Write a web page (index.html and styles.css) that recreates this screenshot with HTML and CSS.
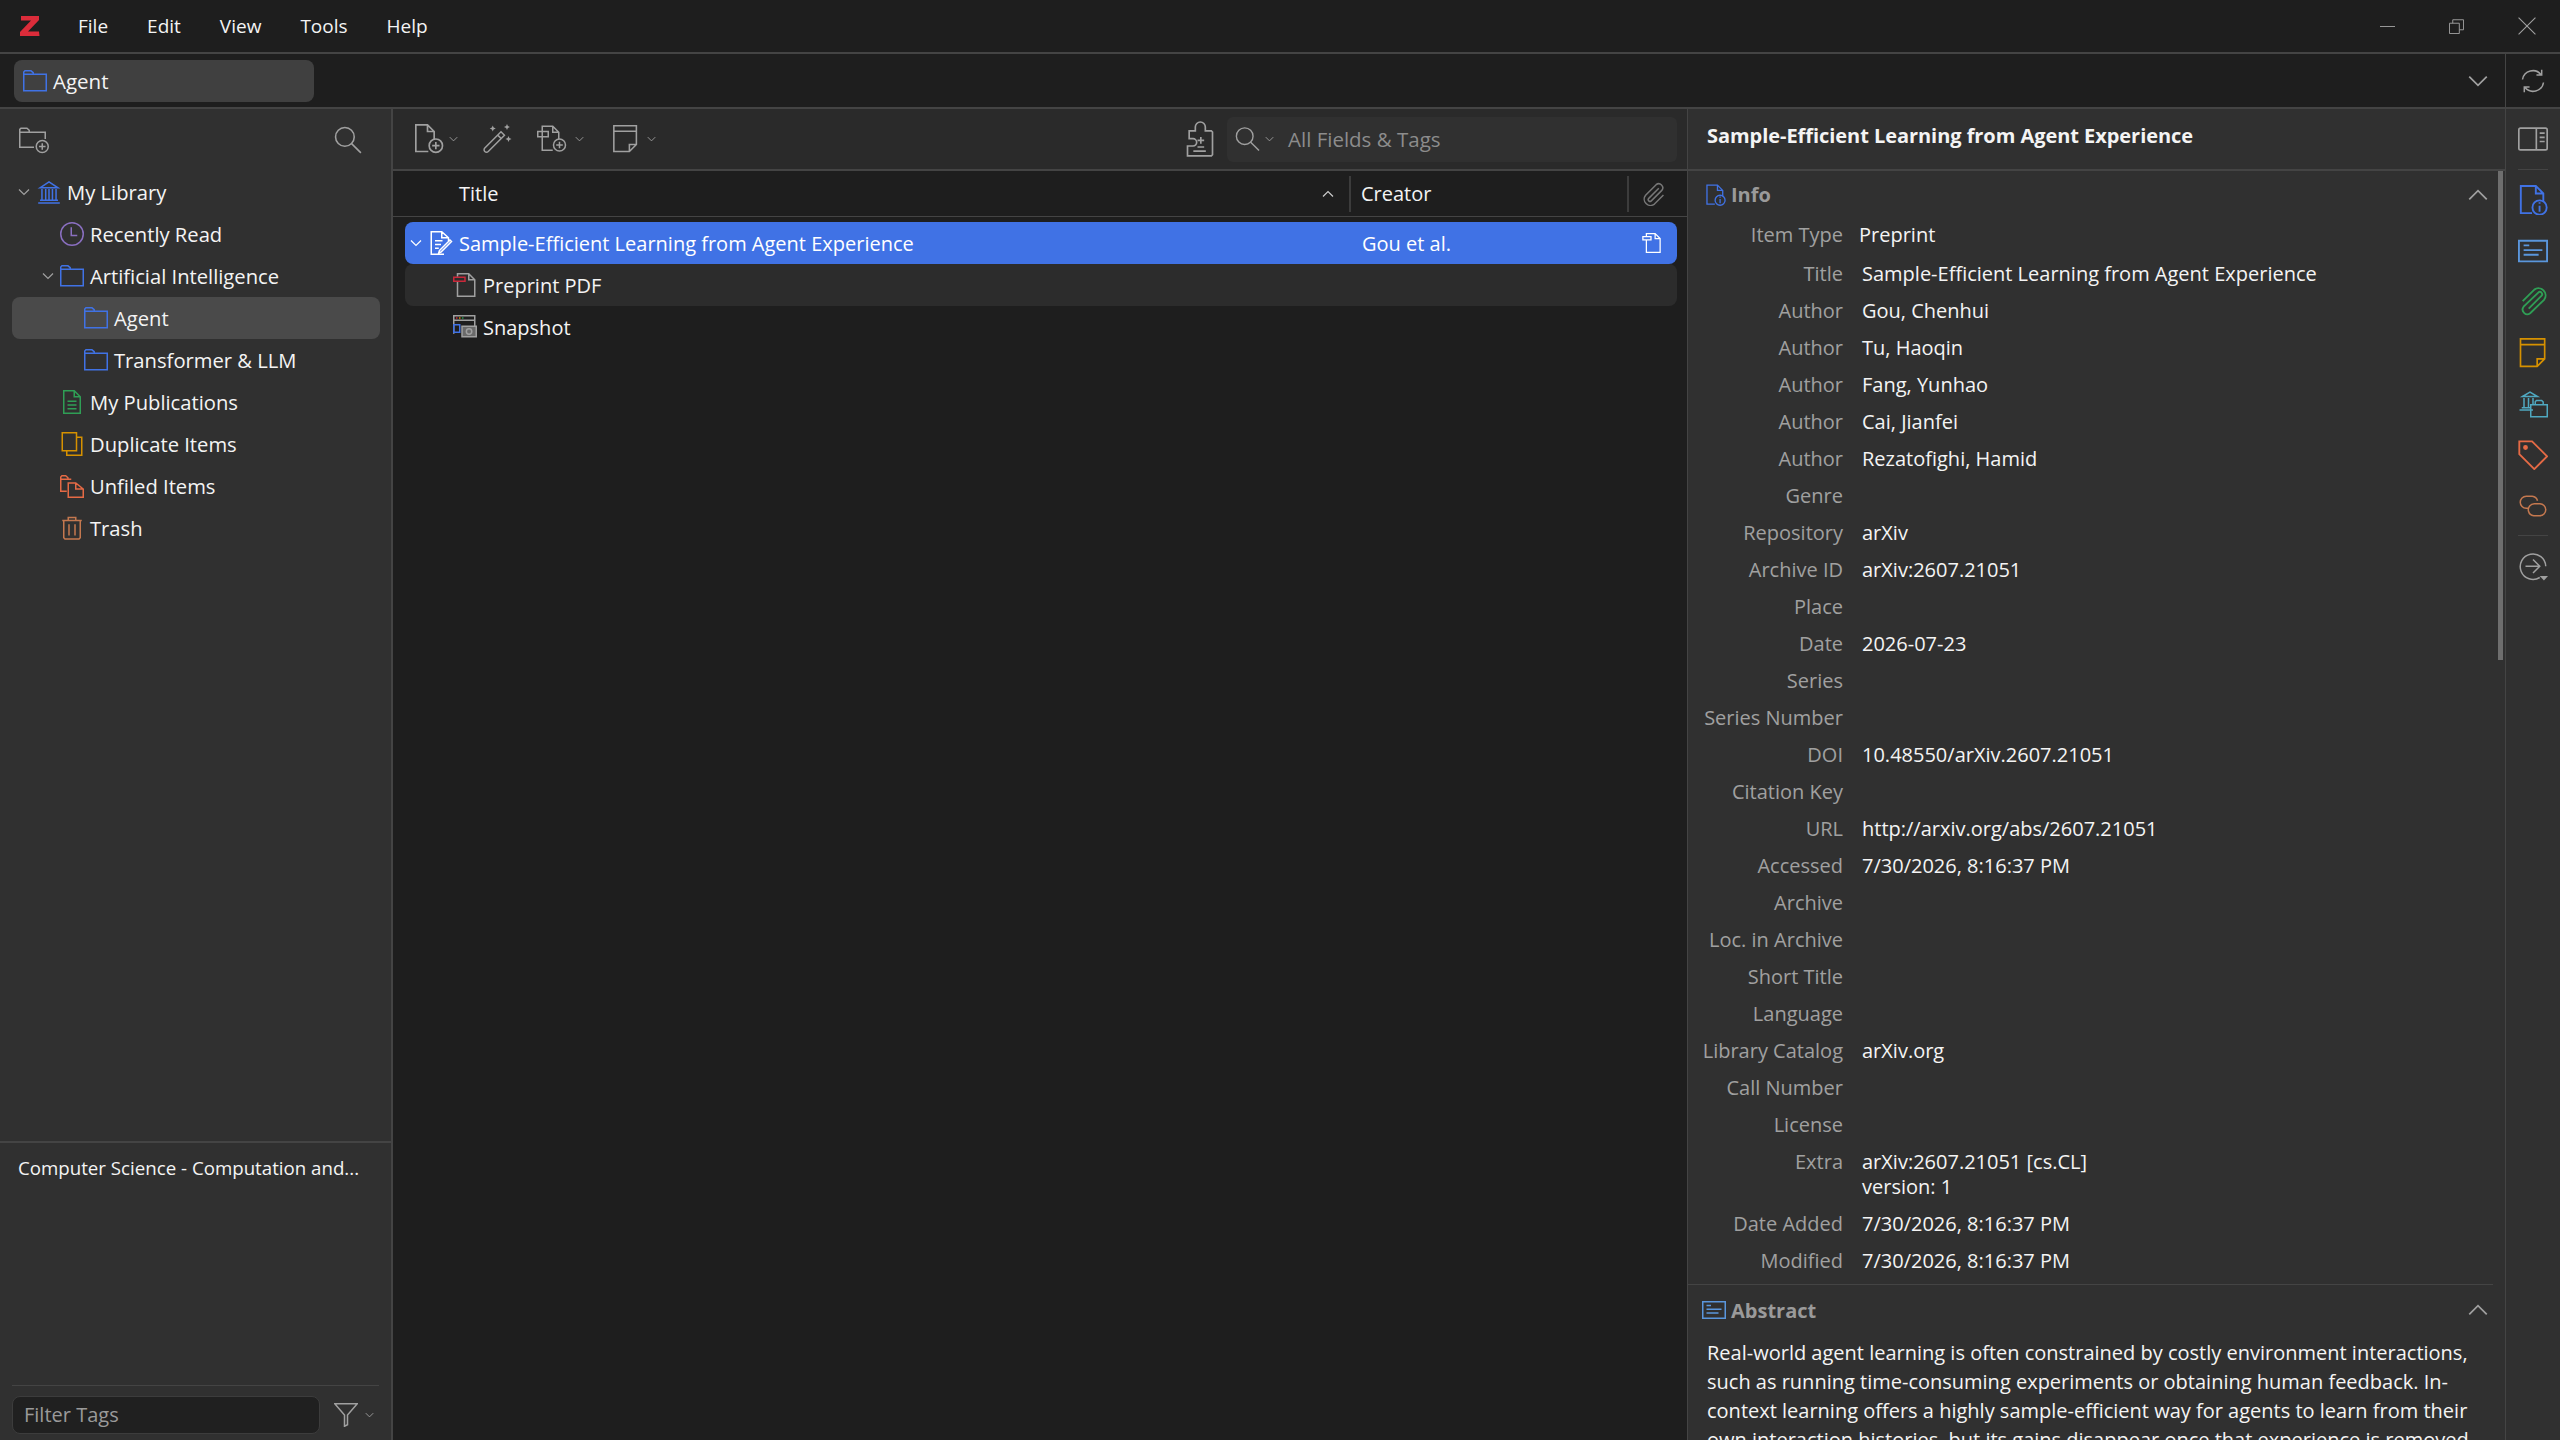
FILE: index.html
```html
<!DOCTYPE html>
<html lang="en">
<head>
    <meta charset="UTF-8">
    <title>Zotero</title>
    <link rel="stylesheet" href="styles.css">
</head>
<body>
    <svg class="sprite" xmlns="http://www.w3.org/2000/svg">
        <symbol id="i-folder" viewBox="0 0 16 16"><path d="M.5 3.5h15v11H.5zM.5 3.5V2l.8-.8h4l1.5 1.2v1.1"/></symbol>
        <symbol id="i-folder-add" viewBox="0 0 20 18"><path d="M10 13.5H.5v-10h17v4.5M.5 3.5V1.6l.8-.8h4l1.5 1.4v1.3"/><circle cx="15.5" cy="13" r="4"/><path d="M15.500 10.800v4.400M13.300 13h4.400"/></symbol>
        <symbol id="i-search" viewBox="0 0 18 18"><circle cx="7" cy="7" r="6"/><path d="M11.300 11.300l6 6"/></symbol>
        <symbol id="i-library" viewBox="0 0 16 16"><path d="M2 5.200L8 1.200l6 4zM.8 15.300h14.400M2 13.500h12M3.300 6v7.500M5.800 6v7.500M8 6v7.500M10.300 6v7.500M12.700 6v7.500"/></symbol>
        <symbol id="i-clock" viewBox="0 0 16 16"><circle cx="8" cy="8" r="7.500"/><path d="M7.500 3.500v5.500h4"/></symbol>
        <symbol id="i-pubs" viewBox="0 0 16 16"><path d="M2.500.5h7l4 4v11h-11zM9.500.5v4h4M5 7.500h6M5 10h6M5 12.500h6"/></symbol>
        <symbol id="i-dupes" viewBox="0 0 16 16"><path d="M1.500.5h9.500v12H1.500zM11 3.500h3.500v12H4.500v-3"/></symbol>
        <symbol id="i-unfiled" viewBox="0 0 16 16"><path d="M4.500 11.500H.5v-8h7M.5 3.500V2l.8-.8h2.500l1.500 1.300v1M5.500 6h5l5 4v5.500h-10zM10.500 6v4h5"/></symbol>
        <symbol id="i-trash" viewBox="0 0 16 16"><path d="M1.500 3h13M5.500 3V1h5v2M2.500 3v11.500l.8.8h9.400l.8-.8V3M6 5.500v7.500M10 5.500v7.500"/></symbol>
        <symbol id="i-new-item" viewBox="0 0 18 18"><path d="M8 16.500H.5V.5h7l4 4v4.500M7.500.5v4h4"/><circle cx="12.500" cy="13" r="4"/><path d="M12.500 10.800v4.400M10.300 13h4.400"/></symbol>
        <symbol id="i-wand" viewBox="0 0 20 20"><path d="M1.200 16L12 5.200l2.300 2.300L3.500 18.300a1.600 1.600 0 0 1-2.300-2.300zM9.800 7.400l2.300 2.300"/><path class="solid" d="M6.500 1l.6 1.400 1.400.6-1.400.6-.6 1.400-.6-1.400L4.500 3l1.400-.6zM16 0l.6 1.400 1.400.6-1.400.6-.6 1.400-.6-1.400L14 2l1.400-.6zM17 8l.6 1.400 1.400.6-1.400.6-.6 1.400-.6-1.400L15 10l1.400-.6z"/></symbol>
        <symbol id="i-new-attach" viewBox="0 0 20 18"><path d="M10.500 16.500H3.500V.5h7l4 4v4.500M10.500.5v4h4"/><path d="M.5 4h7v3.500h-7z"/><circle cx="15" cy="13" r="4"/><path d="M15 10.800v4.400M12.800 13h4.400"/></symbol>
        <symbol id="i-note" viewBox="0 0 16 18"><path d="M.5.5h14.500v12l-4.500 4.500H.5zM.5 4h14.500M15 12.500h-4.500V17"/></symbol>
        <symbol id="i-locate" viewBox="0 0 18 22"><path d="M1.500 20.800h14.300l.7-.7V6.500l-.7-.7h-3.600V3.500a3 3 0 0 0-6 0v2.300H2.500v4.700h2.300a2.200 2.200 0 0 1 0 4.400H1.500v5.900z"/><path d="M9.500 9.500v4M7.500 11.500h4M7.500 15.500h4M5 18h7.500"/></symbol>
        <symbol id="i-clip" viewBox="0 0 16 16"><path d="M11.200 4.200l-6.700 6.700a1.200 1.200 0 0 0 1.700 1.700l7-7a2.700 2.700 0 0 0-3.800-3.800l-7 7a4.200 4.200 0 0 0 5.900 5.900l6-6"/></symbol>
        <symbol id="i-preprint" viewBox="0 0 16 16"><path d="M3.500 5.500v10h11v-11l-4-4h-7v2.300M10.500.5v4h4"/><path d="M.7 2.800h6.500v2.600H.7z"/></symbol>
        <symbol id="i-pdf" viewBox="0 0 16 16"><path d="M3 5.500v10h11.500v-11l-4-4H3v2M10.500.5v4h4"/><path d="M.5 2.800h7.500v2.700H.5z" stroke="#c9283a"/></symbol>
        <symbol id="i-snapshot" viewBox="0 0 16 16"><path d="M.5 12.500V.5h14v8M.5 3.500h14"/><path d="M.5 6.500h4v5h-4z" stroke="#4072e5"/><path d="M6 7.500h9.500v7H6z" fill="#6a6a6a"/><circle cx="10.700" cy="11" r="1.800"/><path d="M2 2h1" stroke="#c9283a"/><path d="M4 2h1" stroke="#d09000"/><path d="M6 2h1" stroke="#2a9d4e"/></symbol>
        <symbol id="i-article" viewBox="0 0 16 16"><path d="M10 15.500H1.500V.5h7l4.500 4v3M8.500.5v4H13M4 6.500h5M4 9h4M4 11.500h2.500M7 13l7-7 1 1-7 7-1.500.5z"/></symbol>
        <symbol id="i-sync" viewBox="0 0 16 16"><path d="M1 7a7 7 0 0 1 12.400-3.200M15 9a7 7 0 0 1-12.400 3.200M13.800.5v3.500h-3.500M2.200 15.500v-3.500h3.500"/></symbol>
        <symbol id="i-pane" viewBox="0 0 18 14"><rect x=".5" y=".5" width="17" height="13" rx="1"/><path d="M11 .5v13M13 3.500h3M13 6h3M13 8.500h3"/></symbol>
        <symbol id="i-info" viewBox="0 0 16 16"><path d="M7.500 15H1.500V.5h8l4 4v4.500M9.500.5v4h4"/><circle cx="11.500" cy="12" r="3.800"/><path d="M11.500 11v3.200M11.500 9.200v.8"/></symbol>
        <symbol id="i-abstract" viewBox="0 0 16 12"><path d="M.5.5h15v11H.5zM3 3h3M3 5.500h10M3 8h8"/></symbol>
        <symbol id="i-attach" viewBox="0 0 16 16"><path d="M5.700 11.500L12.500 4.700a1.200 1.200 0 0 0-1.700-1.700L3 10.500a2.500 2.500 0 0 0 3.500 3.500L14 6.700a3.800 3.800 0 0 0-5.300-5.300L2.500 7.500"/></symbol>
        <symbol id="i-libs" viewBox="0 0 20 20"><path d="M3 5l5-3 5 3zM1 14h9M2.500 12.500h6M4 6v6M7 6v6M10 6v4M8.500 10.500h11v8h-11zM11.500 10.500v-2l.8-.8h3.500l1 1v1.800"/></symbol>
        <symbol id="i-tag" viewBox="0 0 16 16"><path d="M.7.7h6.800l8 8-6.800 6.800-8-8z"/><circle cx="4" cy="4" r=".8" fill="currentColor"/></symbol>
        <symbol id="i-related" viewBox="0 0 20 14"><path d="M7 8.500H5.500a4 4 0 0 1 0-8h4a4 4 0 0 1 3.500 3M13 5.500h1.500a4 4 0 0 1 0 8h-4a4 4 0 0 1-3.500-3 4 4 0 0 1 4-5z"/></symbol>
        <symbol id="i-goto" viewBox="0 0 20 20"><path d="M14.500 17A8.500 8.500 0 1 1 18.500 9.500M5 9.500h9M10 5l4.500 4.500L10 14"/><path class="solid" d="M14.500 16h5.500l-2.700 3z"/></symbol>
        <symbol id="i-filter" viewBox="0 0 16 16"><path d="M.5.5h15L9 8v6.500l-2 1V8z"/></symbol>
        <symbol id="i-down" viewBox="0 0 12 8"><path d="M1 1.500l5 5 5-5"/></symbol>
        <symbol id="i-up" viewBox="0 0 12 8"><path d="M1 6.500l5-5 5 5"/></symbol>
        <symbol id="i-min" viewBox="0 0 16 16"><path d="M0 8h16"/></symbol>
        <symbol id="i-restore" viewBox="0 0 16 16"><path d="M.5 4.500h10.500v11H.5zM4 4.500V.8h11.500v10.700H11"/></symbol>
        <symbol id="i-close" viewBox="0 0 16 16"><path d="M.5.5l15 15M15.500.5l-15 15"/></symbol>
        <symbol id="i-logo" viewBox="0 0 20 20"><path d="M1 0h18v4L8 15.500h11l.5 4.500H0v-4L11 4.500H1z"/></symbol>
    </svg>

    <div class="titlebar">
        <svg class="logo"><use href="#i-logo"/></svg>
        <nav class="menu">
            <span>File</span>
            <span>Edit</span>
            <span>View</span>
            <span>Tools</span>
            <span>Help</span>
        </nav>
        <div class="window-btns">
            <svg class="ic win"><use href="#i-min"/></svg>
            <svg class="ic win"><use href="#i-restore"/></svg>
            <svg class="ic win close"><use href="#i-close"/></svg>
        </div>
    </div>

    <div class="tabbar">
        <div class="tab">
            <svg class="ic blue"><use href="#i-folder"/></svg>
            <span>Agent</span>
        </div>
        <svg class="ic tabs-down"><use href="#i-down"/></svg>
        <div class="sync-box"><svg class="ic"><use href="#i-sync"/></svg></div>
    </div>

    <div class="main">
        <aside class="collections">
            <div class="coll-tools">
                <svg class="ic add-coll"><use href="#i-folder-add"/></svg>
                <svg class="ic coll-search"><use href="#i-search"/></svg>
            </div>
            <ul class="tree">
                <li class="lvl1"><svg class="twisty"><use href="#i-down"/></svg><svg class="ic blue"><use href="#i-library"/></svg><span>My Library</span></li>
                <li class="lvl2"><svg class="ic purple"><use href="#i-clock"/></svg><span>Recently Read</span></li>
                <li class="lvl2"><svg class="twisty"><use href="#i-down"/></svg><svg class="ic blue"><use href="#i-folder"/></svg><span>Artificial Intelligence</span></li>
                <li class="lvl3 current"><svg class="ic blue"><use href="#i-folder"/></svg><span>Agent</span></li>
                <li class="lvl3"><svg class="ic blue"><use href="#i-folder"/></svg><span>Transformer &amp; LLM</span></li>
                <li class="lvl2"><svg class="ic green"><use href="#i-pubs"/></svg><span>My Publications</span></li>
                <li class="lvl2"><svg class="ic yellow"><use href="#i-dupes"/></svg><span>Duplicate Items</span></li>
                <li class="lvl2"><svg class="ic orange"><use href="#i-unfiled"/></svg><span>Unfiled Items</span></li>
                <li class="lvl2"><svg class="ic brown"><use href="#i-trash"/></svg><span>Trash</span></li>
            </ul>
            <div class="tags">
                <div class="tag-list">Computer Science - Computation and...</div>
                <div class="tag-filter">
                    <div class="filter-input">Filter Tags</div>
                    <svg class="ic filter-ic"><use href="#i-filter"/></svg>
                    <svg class="caret"><use href="#i-down"/></svg>
                </div>
            </div>
        </aside>

        <section class="items">
            <div class="items-tools">
                <svg class="ic tool"><use href="#i-new-item"/></svg>
                <svg class="caret"><use href="#i-down"/></svg>
                <svg class="ic tool wand"><use href="#i-wand"/></svg>
                <svg class="ic tool attach"><use href="#i-new-attach"/></svg>
                <svg class="caret"><use href="#i-down"/></svg>
                <svg class="ic tool note"><use href="#i-note"/></svg>
                <svg class="caret"><use href="#i-down"/></svg>
                <svg class="ic tool locate"><use href="#i-locate"/></svg>
                <div class="search-box">
                    <svg class="ic"><use href="#i-search"/></svg>
                    <svg class="caret"><use href="#i-down"/></svg>
                    <span>All Fields &amp; Tags</span>
                </div>
            </div>
            <div class="items-head">
                <div class="col-title">Title<svg class="sort"><use href="#i-up"/></svg></div>
                <div class="col-creator">Creator</div>
                <div class="col-clip"><svg class="ic"><use href="#i-clip"/></svg></div>
            </div>
            <div class="item-row selected">
                <div class="cell-title">
                    <svg class="twisty"><use href="#i-down"/></svg>
                    <svg class="ic"><use href="#i-article"/></svg>
                    <span>Sample-Efficient Learning from Agent Experience</span>
                </div>
                <div class="cell-creator">Gou et al.</div>
                <div class="cell-clip"><svg class="ic"><use href="#i-preprint"/></svg></div>
            </div>
            <div class="item-row child shaded">
                <svg class="ic"><use href="#i-pdf"/></svg>
                <span>Preprint PDF</span>
            </div>
            <div class="item-row child">
                <svg class="ic"><use href="#i-snapshot"/></svg>
                <span>Snapshot</span>
            </div>
        </section>

        <section class="details">
            <div class="details-head">Sample-Efficient Learning from Agent Experience</div>
            <div class="sec-head">
                <svg class="ic blue"><use href="#i-info"/></svg>
                <span>Info</span>
                <svg class="sec-up"><use href="#i-up"/></svg>
            </div>
            <div class="fields">
                <div class="field type"><label>Item Type</label><span>Preprint</span></div>
                <div class="field"><label>Title</label><span>Sample-Efficient Learning from Agent Experience</span></div>
                <div class="field"><label>Author</label><span>Gou, Chenhui</span></div>
                <div class="field"><label>Author</label><span>Tu, Haoqin</span></div>
                <div class="field"><label>Author</label><span>Fang, Yunhao</span></div>
                <div class="field"><label>Author</label><span>Cai, Jianfei</span></div>
                <div class="field"><label>Author</label><span>Rezatofighi, Hamid</span></div>
                <div class="field"><label>Genre</label><span></span></div>
                <div class="field"><label>Repository</label><span>arXiv</span></div>
                <div class="field"><label>Archive ID</label><span>arXiv:2607.21051</span></div>
                <div class="field"><label>Place</label><span></span></div>
                <div class="field"><label>Date</label><span>2026-07-23</span></div>
                <div class="field"><label>Series</label><span></span></div>
                <div class="field"><label>Series Number</label><span></span></div>
                <div class="field"><label>DOI</label><span>10.48550/arXiv.2607.21051</span></div>
                <div class="field"><label>Citation Key</label><span></span></div>
                <div class="field"><label>URL</label><span>http://arxiv.org/abs/2607.21051</span></div>
                <div class="field"><label>Accessed</label><span>7/30/2026, 8:16:37 PM</span></div>
                <div class="field"><label>Archive</label><span></span></div>
                <div class="field"><label>Loc. in Archive</label><span></span></div>
                <div class="field"><label>Short Title</label><span></span></div>
                <div class="field"><label>Language</label><span></span></div>
                <div class="field"><label>Library Catalog</label><span>arXiv.org</span></div>
                <div class="field"><label>Call Number</label><span></span></div>
                <div class="field"><label>License</label><span></span></div>
                <div class="field extra"><label>Extra</label><span>arXiv:2607.21051 [cs.CL]<br>version: 1</span></div>
                <div class="field"><label>Date Added</label><span>7/30/2026, 8:16:37 PM</span></div>
                <div class="field"><label>Modified</label><span>7/30/2026, 8:16:37 PM</span></div>
            </div>
            <div class="sec-head abstract-head">
                <svg class="ic steel"><use href="#i-abstract"/></svg>
                <span>Abstract</span>
                <svg class="sec-up"><use href="#i-up"/></svg>
            </div>
            <p class="abstract">Real-world agent learning is often constrained by costly environment interactions,<br>such as running time-consuming experiments or obtaining human feedback. In-<br>context learning offers a highly sample-efficient way for agents to learn from their<br>own interaction histories, but its gains disappear once that experience is removed.</p>
            <div class="scroll-thumb"></div>
        </section>

        <aside class="sidenav">
            <svg class="ic nav-pane"><use href="#i-pane"/></svg>
            <div class="nav-sep"></div>
            <svg class="ic blue"><use href="#i-info"/></svg>
            <svg class="ic steel"><use href="#i-abstract"/></svg>
            <svg class="ic green"><use href="#i-attach"/></svg>
            <svg class="ic yellow"><use href="#i-note"/></svg>
            <svg class="ic teal"><use href="#i-libs"/></svg>
            <svg class="ic orange"><use href="#i-tag"/></svg>
            <svg class="ic brown"><use href="#i-related"/></svg>
            <div class="nav-sep lower"></div>
            <svg class="ic"><use href="#i-goto"/></svg>
        </aside>
    </div>
</body>
</html>
```

FILE: styles.css
```css
/* Reset and General Styles */
* {
    margin: 0;
    padding: 0;
    box-sizing: border-box;
}

html, body {
    height: 1440px;
    overflow: hidden;
}

body {
    font-family: "Open Sans", "Noto Sans", sans-serif;
    font-size: 20px;
    background-color: #1e1e1e;
    color: #f4f4f4;
    display: flex;
    flex-direction: column;
}

.sprite {
    display: none;
}

.ic {
    width: 24px;
    height: 24px;
    flex: none;
    fill: none;
    stroke: currentColor;
    stroke-width: 1;
    color: #a0a0a0;
}

.solid {
    fill: currentColor;
    stroke: none;
}

.blue { color: #4072e5; }
.purple { color: #8a6fc0; }
.green { color: #2f9e55; }
.yellow { color: #d69100; }
.orange { color: #e56a45; }
.brown { color: #c4784f; }
.steel { color: #5a96dc; }
.teal { color: #4fa8c0; }

.twisty,
.caret {
    width: 12px;
    height: 8px;
    flex: none;
    fill: none;
    stroke: #a0a0a0;
    stroke-width: 1.2;
}

.caret {
    width: 9px;
    height: 6px;
}

/* Title bar */
.titlebar {
    height: 54px;
    display: flex;
    align-items: center;
    border-bottom: 2px solid #444;
    padding-left: 20px;
    flex: none;
    font-size: 19px;
}

.logo {
    width: 20px;
    height: 20px;
    fill: #db2c3a;
}

.menu {
    display: flex;
    gap: 39px;
    margin-left: 38px;
}

.window-btns {
    margin-left: auto;
    display: flex;
    align-items: center;
    gap: 54px;
    padding-right: 24px;
}

.win {
    width: 15px;
    height: 15px;
}

.win.close {
    width: 18px;
    height: 18px;
}

/* Tab bar */
.tabbar {
    height: 55px;
    display: flex;
    align-items: center;
    border-bottom: 2px solid #444;
    padding-left: 14px;
    flex: none;
}

.tab {
    width: 300px;
    height: 42px;
    background-color: #404040;
    border-radius: 8px;
    display: flex;
    align-items: center;
    gap: 6px;
    padding-left: 9px;
    font-size: 20.5px;
}

.tabs-down {
    width: 24px;
    height: 14px;
    margin-left: auto;
    margin-right: 15px;
}

.sync-box {
    width: 55px;
    height: 100%;
    border-left: 1px solid #444;
    display: flex;
    align-items: center;
    justify-content: center;
}

/* Main panes */
.main {
    flex: 1;
    display: flex;
    min-height: 0;
}

.collections {
    width: 393px;
    flex: none;
    background-color: #303030;
    border-right: 2px solid #444;
    display: flex;
    flex-direction: column;
}

.coll-tools {
    height: 62px;
    display: flex;
    align-items: center;
    justify-content: space-between;
    padding: 0 29px 0 19px;
}

.add-coll {
    width: 30px;
    height: 27px;
}

.coll-search {
    width: 28px;
    height: 28px;
}

.tree {
    list-style: none;
    flex: 1;
    font-size: 20.2px;
}

.tree li {
    height: 42px;
    margin: 0 11px 0 12px;
    display: flex;
    align-items: center;
    gap: 6px;
    border-radius: 8px;
    position: relative;
}

.tree li span {
    margin-top: -1px;
}

.tree li .twisty {
    position: absolute;
    top: 17px;
}

.lvl1 { padding-left: 25px; }
.lvl1 .twisty { left: 6px; }
.lvl2 { padding-left: 48px; }
.lvl2 .twisty { left: 30px; }
.lvl3 { padding-left: 72px; }

.tree li.current {
    background-color: #4a4a4a;
}

.tags {
    height: 299px;
    border-top: 2px solid #444;
    display: flex;
    flex-direction: column;
    flex: none;
}

.tag-list {
    flex: 1;
    padding: 12px 18px;
    font-size: 18.7px;
}

.tag-filter {
    margin: 0 12px;
    height: 55px;
    padding-top: 4px;
    border-top: 1px solid #444;
    display: flex;
    align-items: center;
}

.filter-input {
    width: 308px;
    height: 38px;
    background-color: #202020;
    border: 1px solid #3c3c3c;
    border-radius: 8px;
    color: #9a9a9a;
    padding-left: 11px;
    line-height: 35px;
}

.filter-ic {
    margin-left: 14px;
}

.tag-filter .caret {
    margin-left: 7px;
}

/* Items pane */
.items {
    width: 1295px;
    flex: none;
    display: flex;
    flex-direction: column;
    background-color: #1e1e1e;
    border-right: 1px solid #444;
}

.items-tools {
    height: 62px;
    background-color: #2a2a2a;
    border-bottom: 2px solid #444;
    display: flex;
    align-items: center;
    padding: 0 10px 0 22px;
}

.tool {
    width: 30px;
    height: 30px;
}

.items-tools .caret {
    margin-left: 8px;
}

.items-tools .tool:first-child + .caret {
    margin-left: 4px;
}

.tool.wand {
    margin-left: 25px;
}

.tool.attach {
    margin-left: 24px;
}

.tool.note {
    width: 25px;
    height: 28px;
    margin-left: 29px;
}

.tool.note + .caret {
    margin-left: 9px;
}

.tool.locate {
    width: 30px;
    height: 37px;
    margin-left: auto;
}

.search-box {
    width: 450px;
    height: 45px;
    margin-left: 12px;
    background-color: #303030;
    border-radius: 6px;
    display: flex;
    align-items: center;
    color: #8c8c8c;
    padding-left: 8px;
    font-size: 20.5px;
}

.search-box .ic {
    width: 25px;
    height: 26px;
}

.search-box .caret {
    margin-left: 5px;
}

.search-box span {
    margin-left: 14px;
}

.items-head {
    height: 46px;
    display: flex;
    align-items: center;
    border-bottom: 1px solid #444;
    flex: none;
}

.col-title {
    width: 958px;
    height: 36px;
    padding-left: 66px;
    border-right: 2px solid #3c3c3c;
    display: flex;
    align-items: center;
    justify-content: space-between;
    padding-right: 15px;
}

.sort {
    width: 12px;
    height: 8px;
    fill: none;
    stroke: #ccc;
    stroke-width: 1.2;
}

.col-creator {
    width: 278px;
    height: 36px;
    padding-left: 10px;
    border-right: 2px solid #3c3c3c;
    line-height: 36px;
}

.col-clip {
    padding-left: 13px;
    display: flex;
}

.col-clip .ic {
    color: #777;
}

.item-row {
    height: 42px;
    margin: 0 10px 0 12px;
    display: flex;
    align-items: center;
    border-radius: 8px;
    flex: none;
}

.items-head + .item-row {
    margin-top: 5px;
}

.item-row.selected {
    background-color: #4072e5;
    color: #fff;
}

.selected .ic {
    color: #fff;
}

.selected .twisty {
    stroke: #fff;
    margin-left: 5px;
}

.cell-title {
    width: 945px;
    display: flex;
    align-items: center;
    gap: 7px;
    flex: none;
}

.cell-title span {
    margin-left: -1px;
}

.cell-creator {
    width: 278px;
    padding-left: 12px;
    flex: none;
}

.cell-clip {
    padding-left: 14px;
    display: flex;
}

.cell-clip .ic {
    width: 20px;
    height: 20px;
}

.item-row.child {
    padding-left: 48px;
    gap: 6px;
}

.item-row.shaded {
    background-color: #2c2c2c;
}

/* Details pane */
.details {
    width: 818px;
    flex: none;
    background-color: #303030;
    border-right: 1px solid #444;
    position: relative;
    overflow: hidden;
}

.details-head {
    height: 62px;
    padding: 13px 19px;
    font-weight: 700;
    letter-spacing: -0.05px;
    border-bottom: 2px solid #444;
}

.sec-head {
    display: flex;
    align-items: center;
    height: 47px;
    padding: 0 15px 0 17px;
    color: #9a9a9a;
    font-weight: 700;
    gap: 5px;
}

.sec-head .ic {
    width: 21px;
    height: 24px;
}

.abstract-head .ic {
    width: 24px;
    height: 18px;
    margin-left: -3px;
}

.sec-up {
    width: 24px;
    height: 14px;
    margin-left: auto;
    fill: none;
    stroke: #a0a0a0;
    stroke-width: 1;
}

.fields {
    margin: -1px 12px 0 0;
    padding-bottom: 5px;
    border-bottom: 1px solid #444;
}

.field {
    display: grid;
    grid-template-columns: 155px 1fr;
    column-gap: 19px;
    line-height: 37px;
    min-height: 37px;
}

.field label {
    text-align: right;
    color: #a0a0a0;
}

.field.type {
    margin-top: -2px;
    margin-bottom: 2px;
}

.field.type span {
    margin-left: -3px;
}

.field.extra {
    height: 62px;
}

.field.extra span {
    line-height: 25px;
    padding-top: 6px;
}

.abstract-head {
    height: 50px;
}

.abstract {
    padding: 0 19px;
    line-height: 29px;
    margin-top: 3px;
    white-space: nowrap;
}

.scroll-thumb {
    position: absolute;
    top: 62px;
    right: 2px;
    width: 5px;
    height: 489px;
    background-color: #6e6e6e;
}

/* Side navigation */
.sidenav {
    flex: 1;
    background-color: #303030;
    display: flex;
    flex-direction: column;
    align-items: center;
    padding-top: 15px;
    gap: 21px;
}

.sidenav .ic {
    width: 30px;
    height: 30px;
}

.nav-sep {
    width: 30px;
    height: 1px;
    background-color: #444;
    margin: -6px 0;
}

.nav-sep.lower {
    margin: -7px 0 -5px;
}
```
